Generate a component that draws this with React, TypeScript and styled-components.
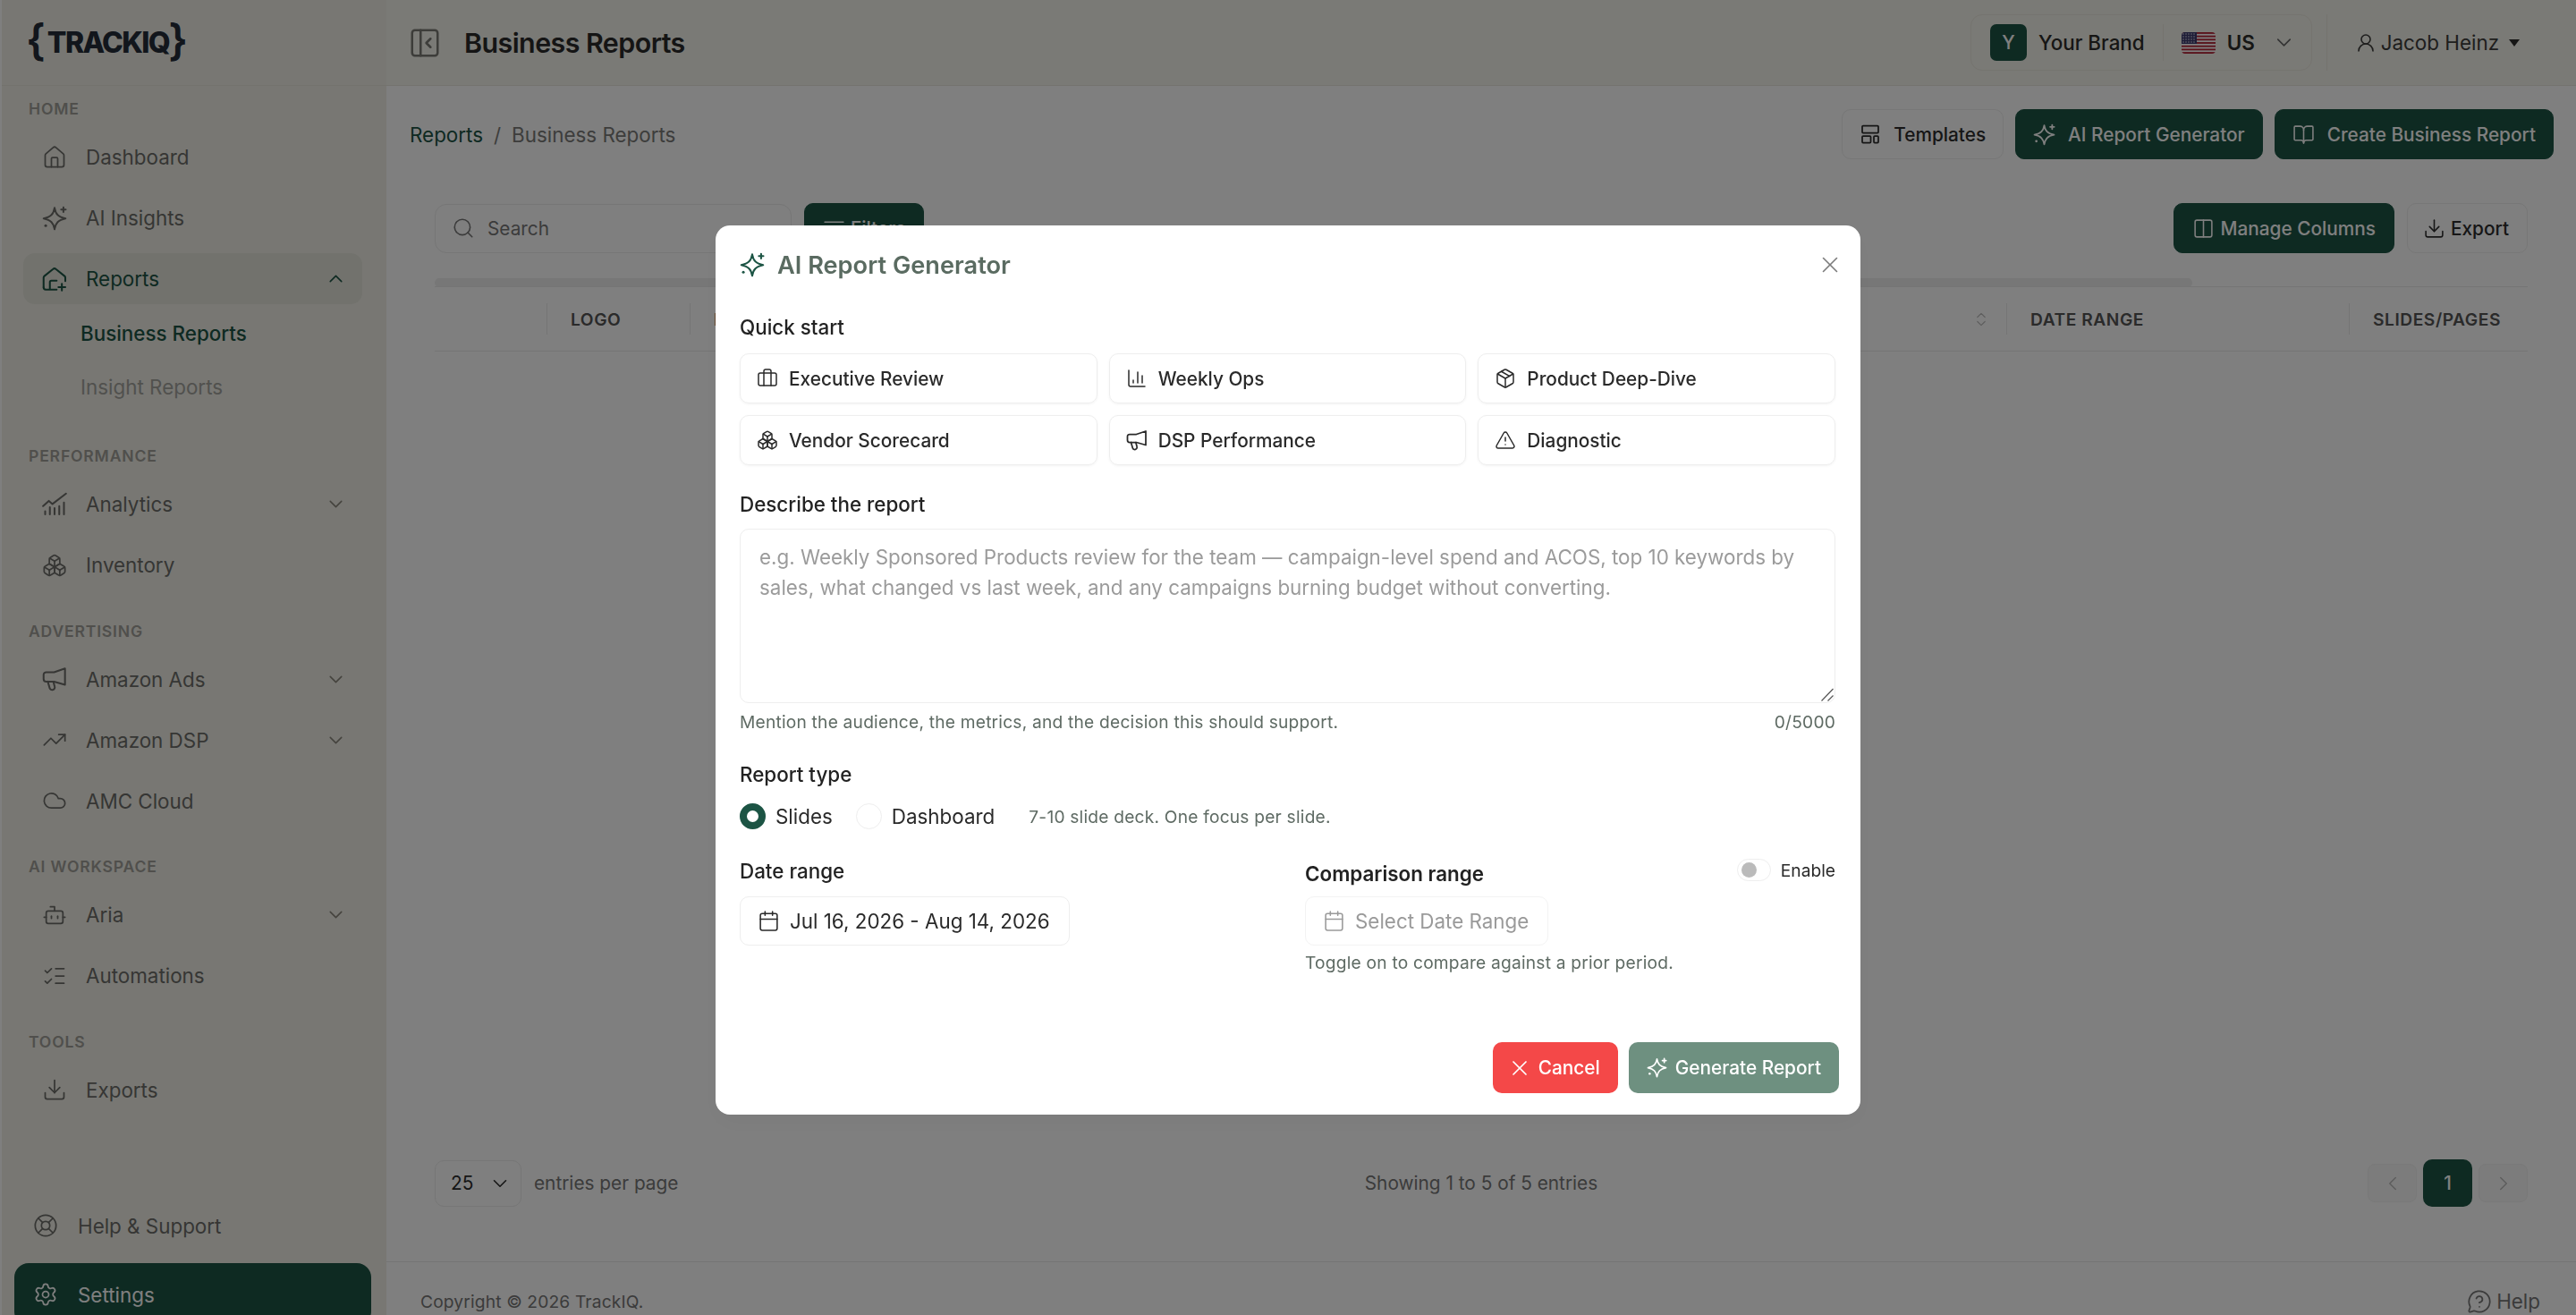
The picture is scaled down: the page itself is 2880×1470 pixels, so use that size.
import React from "react";
import styled, { createGlobalStyle } from "styled-components";
import {
  BookOpen,
  Bot,
  Boxes,
  Briefcase,
  Calendar,
  ChartColumn,
  ChevronDown,
  ChevronLeft,
  ChevronRight,
  ChevronsUpDown,
  ChevronUp,
  Cloud,
  Columns2,
  Download,
  House,
  LifeBuoy,
  ListChecks,
  ListFilter,
  MessageCircleQuestion,
  Package,
  PanelLeftClose,
  Search,
  Settings,
  TrendingUp,
  TriangleAlert,
  UserRound,
  X,
} from "lucide-react";

const GREEN = "#1c5444";

type IconProps = { size?: number };

const Svg = ({ size = 28, children }: IconProps & { children: React.ReactNode }) => (
  <svg
    width={size}
    height={size}
    viewBox="0 0 24 24"
    fill="none"
    stroke="currentColor"
    strokeWidth={1.75}
    strokeLinecap="round"
    strokeLinejoin="round"
    style={{ flexShrink: 0 }}
  >
    {children}
  </svg>
);

const SparkleIcon = ({ size }: IconProps) => (
  <Svg size={size}>
    <path d="M12 2C13 8 15.500 10.800 22.500 12.200 15.500 13.600 13 16.500 12 22.500 11 16.500 8.500 13.600 1.500 12.200 8.500 10.800 11 8 12 2Z" />
    <path d="M20.500 1.500v4.500M18.300 3.700h4.400" />
    <path d="M3.500 19h.01" strokeWidth={2.6} />
  </Svg>
);

const ReportHouseIcon = ({ size }: IconProps) => (
  <Svg size={size}>
    <path d="M1.500 20V10.600a2 2 0 0 1 .7-1.500l8.400-6.700a2 2 0 0 1 2.600 0l8.400 6.700a2 2 0 0 1 .7 1.500V14" />
    <path d="M14 22H3.500a2 2 0 0 1-2-2" />
    <path d="M7.500 21.500v-6.500a1.500 1.500 0 0 1 1.500-1.500h5" />
    <path d="M19 16.500v6.500M15.700 19.700h6.600" />
  </Svg>
);

const AnalyticsIcon = ({ size }: IconProps) => (
  <Svg size={size}>
    <path d="M1 13.500l5.500-5 3.500 3 13-10" />
    <path d="M3 21.500v-3M7.500 21.500v-7M12 21.500v-6M16.500 21.500v-8M21 21.500V10" />
  </Svg>
);

const MegaphoneIcon = ({ size }: IconProps) => (
  <Svg size={size}>
    <path d="M22 2v15.500l-10.500-3H4a2.500 2.500 0 0 1-2.500-2.500V8A2.500 2.500 0 0 1 4 5.500h7.500z" />
    <path d="M5.500 14.500l1.800 6.200a2.500 2.500 0 0 0 4.800-1.400l-1.200-4.600" />
  </Svg>
);

const TemplateIcon = ({ size }: IconProps) => (
  <Svg size={size}>
    <rect x="3" y="2.500" width="18" height="8" rx="1" />
    <rect x="3" y="14" width="9.500" height="7.500" rx="1" />
    <rect x="16" y="14" width="5" height="7.500" rx="1" />
  </Svg>
);

const UsFlag = () => (
  <svg width="38" height="24" viewBox="0 0 38 24" style={{ borderRadius: 4, flexShrink: 0 }}>
    <rect width="38" height="24" fill="#fff" />
    {[0, 2, 4, 6, 8, 10, 12].map((i) => (
      <rect key={i} y={(i * 24) / 13} width="38" height={24 / 13} fill="#b22234" />
    ))}
    <rect width="17" height="13" fill="#3c3b6e" />
    {[2, 5, 8, 11].map((cy) =>
      [2, 5, 8, 11, 14].map((cx) => <circle key={`${cx}-${cy}`} cx={cx} cy={cy} r="0.7" fill="#fff" />)
    )}
  </svg>
);

const GlobalStyle = createGlobalStyle`
  html, body {
    margin: 0;
    padding: 0;
    height: 100%;
    overflow: hidden;
    background: #fff;
    font-family: Inter, "Noto Sans", sans-serif;
  }
  * {
    box-sizing: border-box;
  }
`;

const Page = styled.div`
  display: flex;
  width: 2880px;
  height: 1470px;
  padding-left: 2px;
  overflow: hidden;
  background: #fff;
`;

// SECTION sidebar
const Sidebar = styled.aside`
  width: 430px;
  flex-shrink: 0;
  display: flex;
  flex-direction: column;
  background: #f0efe7;
`;

const LogoBar = styled.div`
  height: 96px;
  flex-shrink: 0;
  display: flex;
  align-items: center;
  padding-left: 27px;
  border-bottom: 1px solid #e6e4da;
  color: #242c38;
`;

const Brace = styled.span`
  font-size: 48px;
  line-height: 1;
  font-weight: 600;
  position: relative;
  top: -3px;
`;

const LogoText = styled.span`
  font-size: 32px;
  font-weight: 800;
  letter-spacing: -1.600px;
  margin: 0 -1px 0 2px;
`;

const SideNav = styled.nav`
  padding: 15px 27px 0 24px;
  display: flex;
  flex-direction: column;
  gap: 34.500px;
`;

const NavGroup = styled.div`
  display: flex;
  flex-direction: column;
  gap: 11px;
`;

const GroupLabel = styled.div`
  height: 22px;
  line-height: 22px;
  padding-left: 6px;
  margin-bottom: 3px;
  font-size: 17.6px;
  font-weight: 600;
  letter-spacing: 0.8px;
  color: #a09f99;
`;

const NavIcon = styled.span`
  width: 28px;
  height: 28px;
  flex-shrink: 0;
  display: flex;
  align-items: center;
  justify-content: center;
`;

const NavItem = styled.div<{ $active?: boolean }>`
  height: 57px;
  display: flex;
  align-items: center;
  gap: 21px;
  padding: 0 17px 0 21px;
  border-radius: 13px;
  font-size: 22.4px;
  color: ${({ $active }) => ($active ? GREEN : "#6d6d69")};
  background: ${({ $active }) => ($active ? "#e4e4da" : "transparent")};
`;

const NavText = styled.span`
  flex: 1;
`;

const Caret = styled.span<{ $active?: boolean }>`
  display: flex;
  color: ${({ $active }) => ($active ? GREEN : "#8a877c")};
`;

const SubList = styled.div`
  display: flex;
  flex-direction: column;
  gap: 16px;
  margin-top: -1px;
  padding-bottom: 10.500px;
`;

const SubItem = styled.div<{ $active?: boolean }>`
  height: 44px;
  display: flex;
  align-items: center;
  padding-left: 64px;
  font-size: 22.4px;
  font-weight: ${({ $active }) => ($active ? 500 : 400)};
  color: ${({ $active }) => ($active ? GREEN : "#a3a29d")};
`;

const SideFooter = styled.div`
  margin-top: auto;
  margin-bottom: -12px;
  padding: 0 17px 0 14px;
  display: flex;
  flex-direction: column;
  gap: 14px;
`;

const FooterItem = styled.div<{ $solid?: boolean }>`
  height: ${({ $solid }) => ($solid ? "70px" : "56px")};
  display: flex;
  align-items: center;
  gap: 22px;
  padding-left: 21px;
  border-radius: 16px;
  font-size: 22.4px;
  color: ${({ $solid }) => ($solid ? "#fff" : "#6d6d69")};
  background: ${({ $solid }) => ($solid ? GREEN : "transparent")};
`;
// !SECTION sidebar

// SECTION main
const Main = styled.main`
  flex: 1;
  min-width: 0;
  display: flex;
  flex-direction: column;
  background: #fefefe;
`;

const TopBar = styled.header`
  height: 96px;
  flex-shrink: 0;
  display: flex;
  align-items: center;
  gap: 25px;
  padding: 0 63px 0 24px;
  background: #f5f4ec;
  border-bottom: 1px solid #e8e6dc;
`;

const TopIcon = styled.span`
  display: flex;
  color: #7a7a74;
`;

const PageTitle = styled.h1`
  flex: 1;
  margin: 0;
  font-size: 30.4px;
  font-weight: 600;
  letter-spacing: -0.55px;
  color: #2b2b2b;
`;

const BrandBox = styled.div`
  height: 63px;
  display: flex;
  align-items: center;
  padding: 0 17px 0 21px;
  border: 1px solid #eae8de;
  border-radius: 13px;
  font-size: 22.4px;
  font-weight: 500;
  color: #2d2d2b;
`;

const BrandTile = styled.span`
  width: 41px;
  height: 41px;
  display: flex;
  align-items: center;
  justify-content: center;
  margin-right: 13px;
  border-radius: 7px;
  background: ${GREEN};
  color: #fff;
  font-size: 20.8px;
`;

const BrandRule = styled.span`
  width: 1px;
  height: 41px;
  margin: 0 20px;
  background: #e8e6dc;
`;

const BrandRegion = styled.span`
  margin: 0 19px 0 13px;
  font-weight: 600;
`;

const UserBlock = styled.div`
  height: 63px;
  display: flex;
  align-items: center;
  gap: 5px;
  margin-left: -9px;
  padding-left: 31px;
  border-left: 1px solid #e8e6dc;
  font-size: 22.4px;
  color: #3d3d3b;
`;

const DropCaret = styled.span`
  margin-left: 6px;
  border-top: 8px solid #2d2d2b;
  border-left: 6.500px solid transparent;
  border-right: 6.500px solid transparent;
`;

const Content = styled.div`
  flex: 1;
  min-height: 0;
  display: flex;
  flex-direction: column;
  gap: 25px;
  padding: 26px 25px 38px 26px;
`;

const ActionRow = styled.div`
  display: flex;
  align-items: center;
  gap: 13px;
`;

const Crumbs = styled.div`
  flex: 1;
  display: flex;
  gap: 12px;
  font-size: 22.4px;
  color: #7b7b78;
`;

const CrumbLink = styled.span`
  color: ${GREEN};
`;

const Button = styled.button<{ $solid?: boolean }>`
  height: 56px;
  display: flex;
  align-items: center;
  gap: 14px;
  padding: 0 19px;
  border-radius: 10px;
  border: 1px solid ${({ $solid }) => ($solid ? GREEN : "#eeeeee")};
  background: ${({ $solid }) => ($solid ? GREEN : "#fff")};
  color: ${({ $solid }) => ($solid ? "#fff" : "#2d2d2d")};
  font-family: inherit;
  font-size: 20.8px;
  font-weight: 500;
`;

const TableCard = styled.section`
  flex: 1;
  min-height: 0;
  display: flex;
  flex-direction: column;
  padding: 24px 29px 23px 28px;
  background: #fff;
  border-radius: 10px;
`;

const TableTools = styled.div`
  display: flex;
  align-items: center;
  gap: 14px;
`;

const SearchBox = styled.div`
  width: 399px;
  height: 55px;
  display: flex;
  align-items: center;
  gap: 14px;
  padding-left: 18px;
  border: 1px solid #ececec;
  border-radius: 13px;
  font-size: 20.8px;
  color: #777;
`;

const ToolSpacer = styled.div`
  flex: 1;
`;

const ToolButton = styled(Button)`
  gap: 6px;
  padding: 0 20px;
`;

const ExportButton = styled(ToolButton)`
  padding: 0 20px 0 17px;
`;

const ScrollBar = styled.div`
  width: 1965px;
  height: 10px;
  margin-top: 28px;
  border-radius: 5px;
  background: #eeeeee;
`;

const HeadRow = styled.div`
  height: 73px;
  flex-shrink: 0;
  display: grid;
  grid-template-columns: 125px 160px 1fr 383px 200px;
  align-items: center;
  border-top: 1px solid #ebebeb;
  border-bottom: 1px solid #ebebeb;
  margin-top: -1px;
`;

const HeadCell = styled.div<{ $first?: boolean }>`
  height: 35px;
  display: flex;
  align-items: center;
  justify-content: space-between;
  padding: 0 18px 0 26px;
  border-left: ${({ $first }) => ($first ? "none" : "1px solid #ebebeb")};
  font-size: 19.2px;
  font-weight: 600;
  letter-spacing: 0.55px;
  color: #555;
  white-space: nowrap;
`;

const SortIcon = styled.span`
  display: flex;
  color: #bdbdbd;
`;

const TableBody = styled.div`
  flex: 1;
`;

const PagerRow = styled.div`
  display: grid;
  grid-template-columns: 1fr auto 1fr;
  align-items: center;
  font-size: 20.8px;
  color: #777;
`;

const PerPage = styled.div`
  display: flex;
  align-items: center;
  gap: 14px;
`;

const PerPageSelect = styled.div`
  width: 97px;
  height: 52px;
  display: flex;
  align-items: center;
  justify-content: space-between;
  padding: 0 10px 0 17px;
  border: 1px solid #ececec;
  border-radius: 10px;
  color: #2d2d2d;
`;

const Pager = styled.div`
  display: flex;
  align-items: center;
  justify-content: flex-end;
  gap: 7px;
`;

const PageArrow = styled.span`
  width: 55px;
  height: 43px;
  display: flex;
  align-items: center;
  justify-content: center;
  border-radius: 8px;
  background: #f8f8f8;
  border: 1px solid #f2f2f2;
  color: #bbb;
`;

const PageCurrent = styled.span`
  width: 55px;
  height: 53px;
  display: flex;
  align-items: center;
  justify-content: center;
  border-radius: 10px;
  background: ${GREEN};
  color: #fff;
  font-weight: 500;
`;

const PageFooter = styled.footer`
  height: 60px;
  flex-shrink: 0;
  display: flex;
  justify-content: space-between;
  padding: 31px 40px 0 38px;
  border-top: 1px solid #ebebeb;
  font-size: 19.2px;
  letter-spacing: 0.15px;
  line-height: 26px;
  color: #777;
`;

const HelpLink = styled.span`
  display: flex;
  align-items: center;
  gap: 5px;
  height: 26px;
  font-size: 22.4px;
  letter-spacing: 0;
`;
// !SECTION main

// SECTION modal
const Overlay = styled.div`
  position: fixed;
  inset: 0;
  display: flex;
  justify-content: center;
  align-items: flex-start;
  padding-top: 252px;
  background: rgba(0, 0, 0, 0.5);
`;

const Modal = styled.div`
  width: 1280px;
  height: 994px;
  display: flex;
  flex-direction: column;
  padding: 24px 28px 24px 27px;
  background: #fff;
  border-radius: 16px;
  box-shadow: 0 10px 24px rgba(0, 0, 0, 0.03);
`;

const ModalHead = styled.div`
  height: 40px;
  display: flex;
  align-items: center;
  justify-content: space-between;
`;

const ModalTitle = styled.h2`
  display: flex;
  align-items: center;
  gap: 14px;
  margin: 0;
  font-size: 27.2px;
  font-weight: 600;
  color: #5a6b61;
`;

const TitleIcon = styled.span`
  display: flex;
  color: ${GREEN};
`;

const CloseIcon = styled.span`
  display: flex;
  margin-right: -9px;
  color: #7c7c7c;
`;

const FieldLabel = styled.div<{ $top?: number }>`
  height: 34px;
  line-height: 34px;
  margin-top: ${({ $top }) => $top ?? 0}px;
  font-size: 22.4px;
  font-weight: 500;
  color: #222;
`;

const PresetGrid = styled.div`
  display: grid;
  grid-template-columns: repeat(3, 1fr);
  gap: 13px;
  margin-top: 12px;
`;

const Preset = styled.div`
  height: 56px;
  display: flex;
  align-items: center;
  gap: 12px;
  padding-left: 18px;
  border: 1px solid #eeeeee;
  border-radius: 10px;
  box-shadow: 0 1px 3px rgba(0, 0, 0, 0.05);
  font-size: 20.8px;
  font-weight: 500;
  color: #2a2a2a;
`;

const DescribeWrap = styled.div`
  position: relative;
  margin-top: 10px;
`;

const Describe = styled.textarea`
  display: block;
  width: 100%;
  height: 195px;
  padding: 14px 21px;
  border: 1px solid #eeeeee;
  border-radius: 10px;
  outline: none;
  resize: none;
  font-family: inherit;
  font-size: 22.4px;
  line-height: 33.5px;
  color: #333;

  &::placeholder {
    color: #9b9b9b;
  }
`;

const ResizeGrip = styled.svg`
  position: absolute;
  right: 1px;
  bottom: 1px;
  width: 16px;
  height: 16px;
`;

const HintRow = styled.div`
  height: 28px;
  display: flex;
  align-items: center;
  justify-content: space-between;
  margin-top: 7px;
`;

const Hint = styled.span`
  font-size: 19.2px;
  letter-spacing: 0.2px;
  color: #5f6b64;
`;

const TypeRow = styled.div`
  display: flex;
  align-items: center;
  margin-top: 15px;
  font-size: 22.4px;
  color: #2a2a2a;
`;

const Radio = styled.span<{ $on?: boolean }>`
  width: 29px;
  height: 29px;
  flex-shrink: 0;
  margin-right: 11px;
  border-radius: 50%;
  border: ${({ $on }) => ($on ? `8.500px solid ${GREEN}` : "1px solid #eeeeee")};
`;

const TypeName = styled.span`
  margin-right: 26px;
`;

const TypeNote = styled(Hint)`
  margin-left: 12px;
`;

const DateGrid = styled.div`
  display: grid;
  grid-template-columns: 593px 593px;
  gap: 39px;
  margin-top: 30px;
`;

const DateColumn = styled.div`
  display: flex;
  flex-direction: column;
  align-items: flex-start;
`;

const CompareHead = styled.div`
  width: 100%;
  height: 34px;
  display: flex;
  justify-content: space-between;
`;

const CompareLabel = styled(FieldLabel)`
  font-weight: 600;
`;

const EnableToggle = styled.div`
  display: flex;
  align-items: center;
  gap: 11px;
  height: 25px;
  margin-top: 3px;
  font-size: 19.2px;
  color: #2a2a2a;
`;

const Switch = styled.span`
  width: 38px;
  height: 25px;
  display: flex;
  align-items: center;
  padding-left: 4px;
  border: 1px solid #eeeeee;
  border-radius: 13px;
`;

const SwitchKnob = styled.span`
  width: 17px;
  height: 17px;
  border-radius: 50%;
  background: #bbbbbb;
`;

const DateInput = styled.div<{ $muted?: boolean }>`
  height: 55px;
  display: flex;
  align-items: center;
  gap: 11px;
  margin-top: 11px;
  padding: 0 21px 0 19px;
  border: 1px solid ${({ $muted }) => ($muted ? "#f3f3f3" : "#eeeeee")};
  border-radius: 10px;
  font-size: 22.4px;
  color: ${({ $muted }) => ($muted ? "#9a9a9a" : "#2a2a2a")};
`;

const CompareHint = styled(Hint)`
  margin-top: 5px;
  line-height: 28px;
`;

const ModalActions = styled.div`
  margin-top: auto;
  margin-right: -4px;
  display: flex;
  justify-content: flex-end;
  gap: 12px;
`;

const ModalButton = styled.button<{ $tone: "red" | "green" }>`
  height: 57px;
  display: flex;
  align-items: center;
  gap: ${({ $tone }) => ($tone === "red" ? "7px" : "9px")};
  padding: ${({ $tone }) => ($tone === "red" ? "0 20px 0 16px" : "0 20px")};
  border: none;
  border-radius: 10px;
  background: ${({ $tone }) => ($tone === "red" ? "#f44848" : "#6e9080")};
  color: #fff;
  font-family: inherit;
  font-size: 20.8px;
  font-weight: 500;
`;
// !SECTION modal

const presetIcon = { size: 24, strokeWidth: 1.5 };

const presets = [
  { label: "Executive Review", icon: <Briefcase {...presetIcon} /> },
  { label: "Weekly Ops", icon: <ChartColumn {...presetIcon} /> },
  { label: "Product Deep-Dive", icon: <Package {...presetIcon} /> },
  { label: "Vendor Scorecard", icon: <Boxes {...presetIcon} /> },
  { label: "DSP Performance", icon: <MegaphoneIcon size={24} /> },
  { label: "Diagnostic", icon: <TriangleAlert {...presetIcon} /> },
];

const navIcon = { size: 32, strokeWidth: 1.5 };
const toolIcon = { size: 25, strokeWidth: 1.5 };

export default function App() {
  const chevron = (
    <Caret>
      <ChevronDown size={25} strokeWidth={1.5} />
    </Caret>
  );

  return (
    <>
      <GlobalStyle />
      <Page>
        <Sidebar>
          <LogoBar>
            <Brace>{"{"}</Brace>
            <LogoText>TRACKIQ</LogoText>
            <Brace>{"}"}</Brace>
          </LogoBar>

          <SideNav>
            <NavGroup>
              <GroupLabel>HOME</GroupLabel>
              <NavItem>
                <NavIcon>
                  <House {...navIcon} />
                </NavIcon>
                <NavText>Dashboard</NavText>
              </NavItem>
              <NavItem>
                <NavIcon>
                  <SparkleIcon />
                </NavIcon>
                <NavText>AI Insights</NavText>
              </NavItem>
              <NavItem $active>
                <NavIcon>
                  <ReportHouseIcon />
                </NavIcon>
                <NavText>Reports</NavText>
                <Caret $active>
                  <ChevronUp size={25} strokeWidth={1.5} />
                </Caret>
              </NavItem>
              <SubList>
                <SubItem $active>Business Reports</SubItem>
                <SubItem>Insight Reports</SubItem>
              </SubList>
            </NavGroup>

            <NavGroup>
              <GroupLabel>PERFORMANCE</GroupLabel>
              <NavItem>
                <NavIcon>
                  <AnalyticsIcon />
                </NavIcon>
                <NavText>Analytics</NavText>
                {chevron}
              </NavItem>
              <NavItem>
                <NavIcon>
                  <Boxes {...navIcon} />
                </NavIcon>
                <NavText>Inventory</NavText>
              </NavItem>
            </NavGroup>

            <NavGroup>
              <GroupLabel>ADVERTISING</GroupLabel>
              <NavItem>
                <NavIcon>
                  <MegaphoneIcon />
                </NavIcon>
                <NavText>Amazon Ads</NavText>
                {chevron}
              </NavItem>
              <NavItem>
                <NavIcon>
                  <TrendingUp {...navIcon} />
                </NavIcon>
                <NavText>Amazon DSP</NavText>
                {chevron}
              </NavItem>
              <NavItem>
                <NavIcon>
                  <Cloud {...navIcon} />
                </NavIcon>
                <NavText>AMC Cloud</NavText>
              </NavItem>
            </NavGroup>

            <NavGroup>
              <GroupLabel>AI WORKSPACE</GroupLabel>
              <NavItem>
                <NavIcon>
                  <Bot {...navIcon} />
                </NavIcon>
                <NavText>Aria</NavText>
                {chevron}
              </NavItem>
              <NavItem>
                <NavIcon>
                  <ListChecks {...navIcon} />
                </NavIcon>
                <NavText>Automations</NavText>
              </NavItem>
            </NavGroup>

            <NavGroup>
              <GroupLabel>TOOLS</GroupLabel>
              <NavItem>
                <NavIcon>
                  <Download {...navIcon} />
                </NavIcon>
                <NavText>Exports</NavText>
              </NavItem>
            </NavGroup>
          </SideNav>

          <SideFooter>
            <FooterItem>
              <NavIcon>
                <LifeBuoy {...navIcon} />
              </NavIcon>
              Help &amp; Support
            </FooterItem>
            <FooterItem $solid>
              <NavIcon>
                <Settings {...navIcon} />
              </NavIcon>
              Settings
            </FooterItem>
          </SideFooter>
        </Sidebar>

        <Main>
          <TopBar>
            <TopIcon>
              <PanelLeftClose size={38} strokeWidth={1.6} />
            </TopIcon>
            <PageTitle>Business Reports</PageTitle>
            <BrandBox>
              <BrandTile>Y</BrandTile>
              Your Brand
              <BrandRule />
              <UsFlag />
              <BrandRegion>US</BrandRegion>
              <ChevronDown size={27} strokeWidth={1.4} color="#666" />
            </BrandBox>
            <UserBlock>
              <UserRound size={24} strokeWidth={1.6} />
              Jacob Heinz
              <DropCaret />
            </UserBlock>
          </TopBar>

          <Content>
            <ActionRow>
              <Crumbs>
                <CrumbLink>Reports</CrumbLink>
                <span>/</span>
                <span>Business Reports</span>
              </Crumbs>
              <Button>
                <TemplateIcon size={24} />
                Templates
              </Button>
              <Button $solid>
                <SparkleIcon size={25} />
                AI Report Generator
              </Button>
              <Button $solid>
                <BookOpen {...toolIcon} />
                Create Business Report
              </Button>
            </ActionRow>

            <TableCard>
              <TableTools>
                <SearchBox>
                  <Search size={26} strokeWidth={1.5} />
                  Search
                </SearchBox>
                <ToolButton $solid>
                  <ListFilter {...toolIcon} />
                  Filters
                </ToolButton>
                <ToolSpacer />
                <ToolButton $solid>
                  <Columns2 {...toolIcon} />
                  Manage Columns
                </ToolButton>
                <ExportButton>
                  <Download {...toolIcon} />
                  Export
                </ExportButton>
              </TableTools>

              <ScrollBar />
              <HeadRow>
                <HeadCell $first />
                <HeadCell>LOGO</HeadCell>
                <HeadCell>
                  NAME
                  <SortIcon>
                    <ChevronsUpDown size={20} strokeWidth={1.5} />
                  </SortIcon>
                </HeadCell>
                <HeadCell>DATE RANGE</HeadCell>
                <HeadCell>SLIDES/PAGES</HeadCell>
              </HeadRow>
              <TableBody />

              <PagerRow>
                <PerPage>
                  <PerPageSelect>
                    25
                    <ChevronDown size={26} strokeWidth={1.5} />
                  </PerPageSelect>
                  entries per page
                </PerPage>
                <span>Showing 1 to 5 of 5 entries</span>
                <Pager>
                  <PageArrow>
                    <ChevronLeft size={26} strokeWidth={1.4} />
                  </PageArrow>
                  <PageCurrent>1</PageCurrent>
                  <PageArrow>
                    <ChevronRight size={26} strokeWidth={1.4} />
                  </PageArrow>
                </Pager>
              </PagerRow>
            </TableCard>
          </Content>

          <PageFooter>
            <span>Copyright © 2026 TrackIQ.</span>
            <HelpLink>
              <MessageCircleQuestion size={28} strokeWidth={1.5} />
              Help
            </HelpLink>
          </PageFooter>
        </Main>
      </Page>

      <Overlay>
        <Modal>
          <ModalHead>
            <ModalTitle>
              <TitleIcon>
                <SparkleIcon size={28} />
              </TitleIcon>
              AI Report Generator
            </ModalTitle>
            <CloseIcon>
              <X size={30} strokeWidth={1.3} />
            </CloseIcon>
          </ModalHead>

          <FieldLabel $top={33}>Quick start</FieldLabel>
          <PresetGrid>
            {presets.map((preset) => (
              <Preset key={preset.label}>
                {preset.icon}
                {preset.label}
              </Preset>
            ))}
          </PresetGrid>

          <FieldLabel $top={27}>Describe the report</FieldLabel>
          <DescribeWrap>
            <Describe
              readOnly
              placeholder="e.g. Weekly Sponsored Products review for the team — campaign-level spend and ACOS, top 10 keywords by sales, what changed vs last week, and any campaigns burning budget without converting."
            />
            <ResizeGrip viewBox="0 0 16 16" fill="none" stroke="#555" strokeWidth="1.2">
              <path d="M14.500 1 1.500 14.500M14.500 8.500 8.500 14.500" />
            </ResizeGrip>
          </DescribeWrap>
          <HintRow>
            <Hint>Mention the audience, the metrics, and the decision this should support.</Hint>
            <Hint>0/5000</Hint>
          </HintRow>

          <FieldLabel $top={28}>Report type</FieldLabel>
          <TypeRow>
            <Radio $on />
            <TypeName>Slides</TypeName>
            <Radio />
            <TypeName>Dashboard</TypeName>
            <TypeNote>7-10 slide deck. One focus per slide.</TypeNote>
          </TypeRow>

          <DateGrid>
            <DateColumn>
              <FieldLabel>Date range</FieldLabel>
              <DateInput>
                <Calendar size={25} strokeWidth={1.5} />
                Jul 16, 2026 - Aug 14, 2026
              </DateInput>
            </DateColumn>
            <DateColumn>
              <CompareHead>
                <CompareLabel $top={3}>Comparison range</CompareLabel>
                <EnableToggle>
                  <Switch>
                    <SwitchKnob />
                  </Switch>
                  Enable
                </EnableToggle>
              </CompareHead>
              <DateInput $muted>
                <Calendar size={25} strokeWidth={1.5} />
                Select Date Range
              </DateInput>
              <CompareHint>Toggle on to compare against a prior period.</CompareHint>
            </DateColumn>
          </DateGrid>

          <ModalActions>
            <ModalButton $tone="red">
              <X size={28} strokeWidth={1.5} />
              Cancel
            </ModalButton>
            <ModalButton $tone="green">
              <SparkleIcon size={23} />
              Generate Report
            </ModalButton>
          </ModalActions>
        </Modal>
      </Overlay>
    </>
  );
}
